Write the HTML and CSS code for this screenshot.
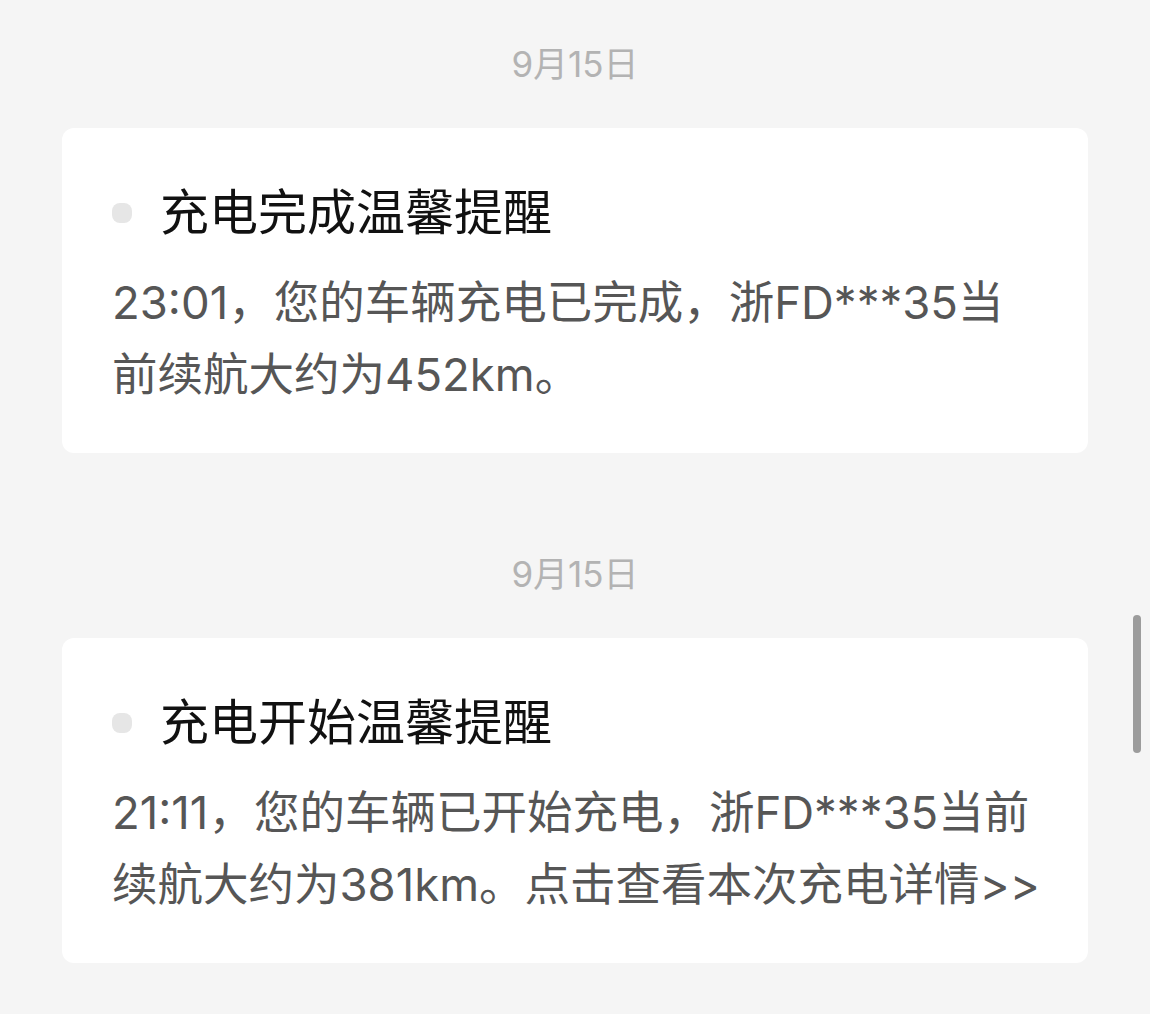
FILE: index.html
```html
<!DOCTYPE html>
<html lang="zh-CN">
<head>
    <meta charset="UTF-8">
    <meta name="viewport" content="width=device-width, initial-scale=1.0">
    <title>消息通知</title>
    <link rel="stylesheet" href="styles.css">
</head>
<body>
    <section class="message-list">
        <div class="message-group">
            <div class="message-date">9月15日</div>
            <div class="message-card">
                <div class="message-title">
                    <span class="dot"></span>
                    <span>充电完成温馨提醒</span>
                </div>
                <p class="message-body">23:01，您的车辆充电已完成，浙FD***35当前续航大约为452km。</p>
            </div>
        </div>

        <div class="message-group">
            <div class="message-date">9月15日</div>
            <div class="message-card">
                <div class="message-title">
                    <span class="dot"></span>
                    <span>充电开始温馨提醒</span>
                </div>
                <p class="message-body">21:11，您的车辆已开始充电，浙FD***35当前续航大约为381km。点击查看本次充电详情&gt;&gt;</p>
            </div>
        </div>
    </section>

    <div class="scrollbar"></div>
</body>
</html>
```

FILE: styles.css
```css
body {
    font-family: Inter, "Noto Sans CJK SC", sans-serif;
    background: #f5f5f5;
    margin: 0;
    padding: 0;
    height: 1014px;
    overflow: hidden;
}

.message-list {
    padding: 39px 62px 0;
}

.message-group {
    margin-bottom: 96px;
}

.message-date {
    text-align: center;
    font-size: 35px;
    line-height: 50px;
    color: #b3b3b3;
    margin-bottom: 39px;
}

.message-card {
    background: white;
    border-radius: 12px;
    padding: 60px 46px 42px 50px;
}

.message-title {
    display: flex;
    align-items: center;
    font-size: 49px;
    line-height: 50px;
    color: #111;
    margin-bottom: 29px;
}

.message-title .dot {
    width: 20px;
    height: 20px;
    border-radius: 8px;
    background: #e6e6e6;
    margin-right: 28px;
    flex-shrink: 0;
}

.message-body {
    margin: 0;
    font-size: 45.5px;
    line-height: 72px;
    color: #565656;
}

.scrollbar {
    position: absolute;
    left: 1133px;
    top: 615px;
    width: 8px;
    height: 138px;
    border-radius: 4px;
    background: #9c9c9c;
}
```
